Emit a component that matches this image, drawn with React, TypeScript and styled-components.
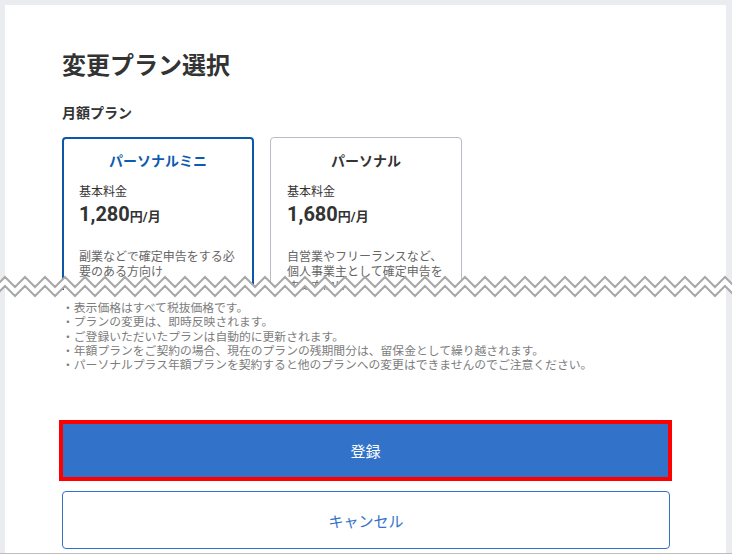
import styled, { createGlobalStyle } from "styled-components";

const GlobalStyle = createGlobalStyle`
    html, body {
        margin: 0;
        padding: 0;
        background: #ebecf0;
    }
    body {
        font-family: Roboto, "Noto Sans CJK JP", sans-serif;
        color: #333;
    }
    * {
        box-sizing: border-box;
    }
`;

const StyledPage = styled.div`
    position: relative;
    width: 732px;
    height: 554px;
    padding: 5px 6px 0 5px;
    border-bottom: 1px solid #bdbdbd;
    overflow: hidden;
`;

const StyledSheet = styled.div`
    height: 548px;
    background-color: #fff;
    padding: 45px 56px 0 57px;
    display: flex;
    flex-direction: column;
`;

const StyledClip = styled.div`
    height: 240px;
    overflow: hidden;
`;

const StyledTitle = styled.h1`
    margin: 0;
    font-size: 24px;
    line-height: 32px;
    font-weight: bold;
    color: #333;
`;

const StyledSubTitle = styled.h2`
    margin: 21px 0 0;
    font-size: 14px;
    line-height: 20px;
    font-weight: bold;
    color: #333;
`;

const StyledPlans = styled.div`
    margin-top: 14px;
    display: flex;
    gap: 16px;
`;

const StyledCard = styled.div<{ $selected?: boolean }>`
    width: 192px;
    height: 180px;
    border-radius: 4px;
    border: ${(p) => (p.$selected ? "2px solid #0b57a8" : "1px solid #b9bcc6")};
    padding: ${(p) => (p.$selected ? "12px 15px" : "13px 16px")};
    display: flex;
    flex-direction: column;
`;

const StyledCardTitle = styled.div<{ $selected?: boolean }>`
    text-align: center;
    font-size: 14px;
    line-height: 20px;
    font-weight: bold;
    color: ${(p) => (p.$selected ? "#0d5bb0" : "#333")};
`;

const StyledLabel = styled.div`
    margin-top: 12px;
    font-size: 12px;
    line-height: 18px;
    color: #333;
`;

const StyledPrice = styled.div`
    font-size: 20px;
    line-height: 26px;
    font-weight: bold;
    color: #333;
`;

const StyledUnit = styled.span`
    font-size: 13px;
`;

const StyledDesc = styled.p`
    margin: 20px 0 0;
    font-size: 12px;
    line-height: 15px;
    color: #666;
`;

const StyledNotes = styled.ul`
    margin: 11px 0 0;
    padding: 0;
    list-style: none;
    font-size: 11.8px;
    line-height: 14.3px;
    color: #7d7d7d;
`;

const StyledNote = styled.li`
    &::before {
        content: "・";
    }
`;

const StyledActions = styled.div`
    margin-top: 48px;
    display: flex;
    flex-direction: column;
    gap: 10px;
`;

const StyledButton = styled.button<{ $primary?: boolean }>`
    font-family: inherit;
    font-size: 15px;
    cursor: pointer;
    border-radius: ${(p) => (p.$primary ? "0" : "4px")};
    height: ${(p) => (p.$primary ? "61px" : "58px")};
    margin: ${(p) => (p.$primary ? "0 -2px 0 -3px" : "0")};
    border: ${(p) => (p.$primary ? "4px solid #ff0000" : "1px solid #3273c9")};
    background-color: ${(p) => (p.$primary ? "#3273c9" : "#fff")};
    color: ${(p) => (p.$primary ? "#fff" : "#3273c9")};
`;

const StyledCut = styled.svg`
    position: absolute;
    left: 0;
    top: 274px;
`;

const notes = [
    "表示価格はすべて税抜価格です。",
    "プランの変更は、即時反映されます。",
    "ご登録いただいたプランは自動的に更新されます。",
    "年額プランをご契約の場合、現在のプランの残期間分は、留保金として繰り越されます。",
    "パーソナルプラス年額プランを契約すると他のプランへの変更はできませんのでご注意ください。",
];

const plans = [
    {
        name: "パーソナルミニ",
        price: "1,280",
        desc: "副業などで確定申告をする必要のある方向け",
        selected: true,
    },
    {
        name: "パーソナル",
        price: "1,680",
        desc: "自営業やフリーランスなど、個人事業主として確定申告をする方向け",
        selected: false,
    },
];

function zigzag(top: number, bottom: number) {
    const pts: string[] = [];
    for (let x = -15; x <= 760; x += 10) {
        const peak = ((x - 5) / 10) % 2 === 0;
        pts.push(`${x},${peak ? top : bottom}`);
    }
    return pts;
}

function CutMark() {
    const upper = zigzag(3, 13);
    const lower = zigzag(12, 22);
    const fill = [...upper, ...[...lower].reverse()].join(" ");
    return (
        <StyledCut width="732" height="26" viewBox="0 0 732 26">
            <polygon points={fill} fill="#fff" />
            <polyline points={upper.join(" ")} fill="none" stroke="#a8a8a8" strokeWidth="2" />
            <polyline points={lower.join(" ")} fill="none" stroke="#a8a8a8" strokeWidth="2" />
        </StyledCut>
    );
}

export default function App() {
    return (
        <StyledPage>
            <GlobalStyle />
            <StyledSheet>
                <StyledClip>
                    <StyledTitle>変更プラン選択</StyledTitle>
                    <StyledSubTitle>月額プラン</StyledSubTitle>
                    <StyledPlans>
                        {plans.map((plan) => (
                            <StyledCard key={plan.name} $selected={plan.selected}>
                                <StyledCardTitle $selected={plan.selected}>{plan.name}</StyledCardTitle>
                                <StyledLabel>基本料金</StyledLabel>
                                <StyledPrice>
                                    {plan.price}
                                    <StyledUnit>円/月</StyledUnit>
                                </StyledPrice>
                                <StyledDesc>{plan.desc}</StyledDesc>
                            </StyledCard>
                        ))}
                    </StyledPlans>
                </StyledClip>
                <StyledNotes>
                    {notes.map((n) => (
                        <StyledNote key={n}>{n}</StyledNote>
                    ))}
                </StyledNotes>
                <StyledActions>
                    <StyledButton $primary>登録</StyledButton>
                    <StyledButton>キャンセル</StyledButton>
                </StyledActions>
            </StyledSheet>
            <CutMark />
        </StyledPage>
    );
}
